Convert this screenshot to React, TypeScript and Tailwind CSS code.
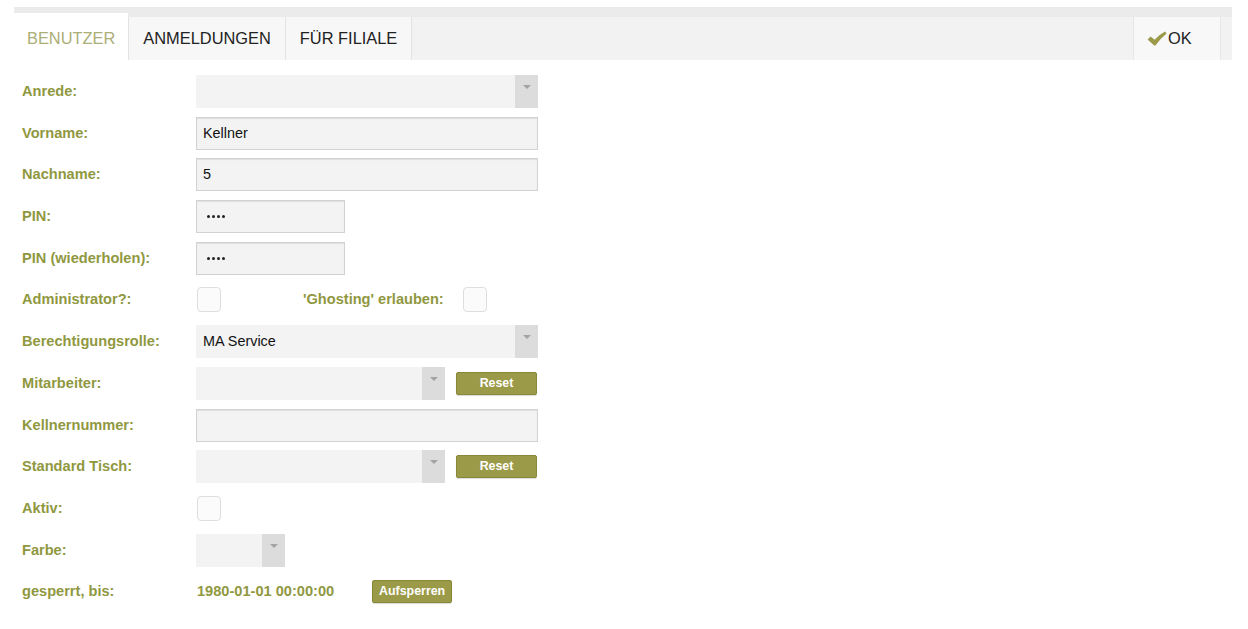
import React from "react";

const labelCls =
  "w-[174px] shrink-0 text-[14.6px] font-bold leading-[33px] text-[#90983f]";

function Arrow() {
  return (
    <div className="flex w-[23px] shrink-0 justify-center bg-[#dcdcdc] pt-[10px]">
      <div className="h-0 w-0 border-x-[4px] border-t-[4px] border-x-transparent border-t-[#a3a3a3]" />
    </div>
  );
}

function Select({ width, value }: { width: string; value?: string }) {
  return (
    <div className={`flex h-[33px] bg-[#f3f3f3] ${width}`}>
      <div className="flex-1 pl-[7px] text-[14.4px] leading-[33px] text-[#111]">
        {value}
      </div>
      <Arrow />
    </div>
  );
}

function Input({ width, value }: { width: string; value?: string }) {
  return (
    <div
      className={`h-[33px] border border-[#d2d2d2] bg-[#f3f3f3] pl-[6px] text-[14.4px] leading-[31px] text-[#111] shadow-[inset_0_1px_1px_rgba(0,0,0,0.08)] ${width}`}
    >
      {value}
    </div>
  );
}

function Pin() {
  return (
    <div className="flex h-[33px] w-[149px] items-center gap-[2px] border border-[#d2d2d2] bg-[#f3f3f3] pl-[10px] shadow-[inset_0_1px_1px_rgba(0,0,0,0.08)]">
      <span className="h-[3px] w-[3px] rounded-full bg-[#222]" />
      <span className="h-[3px] w-[3px] rounded-full bg-[#222]" />
      <span className="h-[3px] w-[3px] rounded-full bg-[#222]" />
      <span className="h-[3px] w-[3px] rounded-full bg-[#222]" />
    </div>
  );
}

function Checkbox() {
  return (
    <div className="h-[25px] w-[24px] rounded-[4px] border border-[#dedede] bg-[#fbfbfb]" />
  );
}

function Button({ children, width }: { children: React.ReactNode; width: string }) {
  return (
    <button
      type="button"
      className={`flex h-[23px] items-center justify-center rounded-[2px] border border-[#88883a] bg-[#9b9a48] text-[12.4px] font-bold text-white shadow-[0_1px_1px_rgba(0,0,0,0.15)] ${width}`}
    >
      {children}
    </button>
  );
}

function Row({ label, children }: { label: string; children?: React.ReactNode }) {
  return (
    <div className="flex h-[33px] items-center">
      <div className={labelCls}>{label}</div>
      {children}
    </div>
  );
}

export default function App() {
  return (
    <div className="min-h-screen bg-white font-['Liberation_Sans',Arial,sans-serif]">
      {/* tab bar */}
      <div className="pl-[14px] pt-[7px]">
        <div className="w-[1218px] bg-[#ebebeb] pt-[10px]">
          <div className="flex h-[43px] bg-[#f2f2f2]">
            <div className="-mt-[4px] flex h-[47px] items-center bg-white px-[13px] pt-[3px] text-[16.4px] text-[#abae76]">
              BENUTZER
            </div>
            <div className="flex items-center border-x border-[#e3e3e3] bg-[#f7f7f7] px-[14px] text-[16.4px] text-[#222]">
              ANMELDUNGEN
            </div>
            <div className="flex items-center border-r border-[#e3e3e3] bg-[#f7f7f7] px-[14px] text-[16.4px] text-[#222]">
              FÜR FILIALE
            </div>
            <div className="flex-1" />
            <div className="flex w-[88px] items-center border-x border-[#e6e6e6] bg-[#f8f8f8] pl-[13px] text-[16.4px] text-[#222]">
              <svg width="20" height="15" viewBox="0 0 20 15" className="mr-[1px]">
                <path
                  d="M0.6 8.4 L3.6 5.4 L7.6 8.8 Q12 3.6 18 0.4 L19.6 2.4 Q13.4 7.4 8.4 14.4 L7.2 14.4 Z"
                  fill="#9b9a48"
                />
              </svg>
              OK
            </div>
            <div className="w-[11px]" />
          </div>
        </div>
      </div>

      {/* form */}
      <div className="flex flex-col gap-[8.7px] pl-[22px] pt-[15px]">
        <Row label="Anrede:">
          <Select width="w-[342px]" />
        </Row>
        <Row label="Vorname:">
          <Input width="w-[342px]" value="Kellner" />
        </Row>
        <Row label="Nachname:">
          <Input width="w-[342px]" value="5" />
        </Row>
        <Row label="PIN:">
          <Pin />
        </Row>
        <Row label="PIN (wiederholen):">
          <Pin />
        </Row>
        <Row label="Administrator?:">
          <div className="ml-[1px]">
            <Checkbox />
          </div>
          <div className="ml-[82px] text-[14.6px] font-bold text-[#90983f]">
            'Ghosting' erlauben:
          </div>
          <div className="ml-[19px]">
            <Checkbox />
          </div>
        </Row>
        <Row label="Berechtigungsrolle:">
          <Select width="w-[342px]" value="MA Service" />
        </Row>
        <Row label="Mitarbeiter:">
          <Select width="w-[249px]" />
          <div className="ml-[11px]">
            <Button width="w-[81px]">Reset</Button>
          </div>
        </Row>
        <Row label="Kellnernummer:">
          <Input width="w-[342px]" />
        </Row>
        <Row label="Standard Tisch:">
          <Select width="w-[249px]" />
          <div className="ml-[11px]">
            <Button width="w-[81px]">Reset</Button>
          </div>
        </Row>
        <Row label="Aktiv:">
          <div className="ml-[1px]">
            <Checkbox />
          </div>
        </Row>
        <Row label="Farbe:">
          <Select width="w-[89px]" />
        </Row>
        <Row label="gesperrt, bis:">
          <div className="ml-[1px] text-[14.6px] font-bold text-[#90983f]">
            1980-01-01 00:00:00
          </div>
          <div className="ml-[38px]">
            <Button width="w-[80px]">Aufsperren</Button>
          </div>
        </Row>
      </div>
    </div>
  );
}
